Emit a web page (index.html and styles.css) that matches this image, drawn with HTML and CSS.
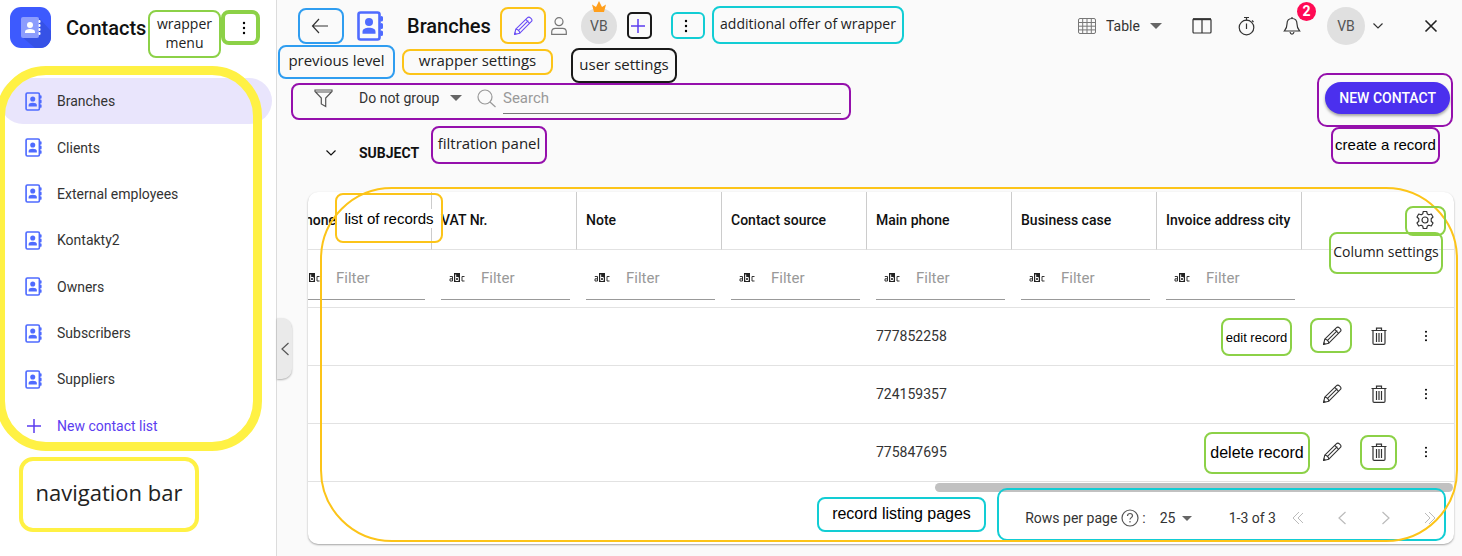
FILE: index.html
```
<!DOCTYPE html>
<html lang="en">
<head>
	<meta charset="UTF-8">
	<meta name="viewport" content="width=device-width, initial-scale=1">
	<title>Contacts - Branches</title>
	<link rel="stylesheet" href="styles.css">
</head>
<body>
	<!-- icon set -->
	<svg class="defs" aria-hidden="true">
		<symbol id="i-contact" viewBox="0 0 28 30">
			<rect x="1.500" y="1.500" width="21" height="27" rx="2" fill="none" stroke="currentColor" stroke-width="2.600"/>
			<circle cx="12" cy="11" r="4" fill="currentColor"/>
			<path d="M5.500 22.700v-2c0-2.800 3-3.900 6.500-3.900s6.500 1.100 6.500 3.900v2z" fill="currentColor"/>
			<path d="M24.500 6.500v2.500M24.500 13.500v3M24.500 21v2.500" stroke="currentColor" stroke-width="3" stroke-linecap="round"/>
		</symbol>
		<symbol id="i-dots" viewBox="0 0 4 14">
			<circle cx="2" cy="2" r="1.200"/><circle cx="2" cy="7" r="1.200"/><circle cx="2" cy="12" r="1.200"/>
		</symbol>
		<symbol id="i-pencil" viewBox="0 0 20 20">
			<g fill="none" stroke="currentColor" stroke-width="1.100" stroke-linejoin="round">
				<path d="M1.500 18.500l1.300-5.300L14.300 1.800c.9-.9 2.200-.9 3.100 0l.8.8c.9.9.9 2.200 0 3.100L6.800 17.200z"/>
				<path d="M2.800 13.200c2 0 4 2 4 4M5 14.800L15.300 4.600M12.700 3.400l3.900 3.900"/>
			</g>
			<path d="M1.300 18.700l.6-2.600 2 2z" fill="currentColor"/>
		</symbol>
		<symbol id="i-trash" viewBox="0 0 16 18">
			<g fill="none" stroke="currentColor">
				<path d="M.5 3.500h15M5.500 3.300V1.200h5v2.100M2 3.700v12.500c0 .7.500 1.200 1.200 1.200h9.600c.7 0 1.200-.5 1.200-1.200V3.700M5.500 6v9M8 6v9M10.500 6v9" stroke-width="1.200"/>
			</g>
		</symbol>
		<symbol id="i-plus" viewBox="0 0 16 16">
			<path d="M8 1v14M1 8h14" stroke="currentColor" stroke-width="1.500"/>
		</symbol>
		<symbol id="i-caret" viewBox="0 0 12 6"><path d="M0 0h12L6 6z" fill="currentColor"/></symbol>
		<symbol id="i-down" viewBox="0 0 12 8">
			<path d="M1.500 1.500L6 6l4.500-4.500" fill="none" stroke="currentColor" stroke-width="1.200"/>
		</symbol>
		<symbol id="i-left" viewBox="0 0 10 14">
			<path d="M8.500 1L2 7l6.500 6" fill="none" stroke="currentColor" stroke-width="1.200"/>
		</symbol>
		<symbol id="i-dleft" viewBox="0 0 12 14">
			<path d="M7 1L1 7l6 6M11 2L6 7l5 5" fill="none" stroke="currentColor"/>
		</symbol>
		<symbol id="i-abc" viewBox="0 0 16 10">
			<rect x="5" y="0" width="6" height="9" fill="#222"/>
			<g fill="none" stroke="#333">
				<path d="M.8 3.500h2.700V8H1V5.800h2.500M15.500 3.500h-2.500V8h2.500"/>
				<path d="M6.700 1.500v6h2.600v-3H7" stroke="#fff"/>
			</g>
		</symbol>
	</svg>

	<aside class="sidebar">
		<div class="side-head">
			<svg class="logo" viewBox="0 0 41 41" aria-hidden="true">
				<rect width="41" height="41" rx="11" fill="#3d5afe"/>
				<path d="M29 11l12 13v6a11 11 0 0 1-11 11h-5L12 30z" fill="#3652e6"/>
				<rect x="11" y="10" width="18" height="21" rx="2" fill="#8c9dfd"/>
				<circle cx="20" cy="18" r="3" fill="#fff"/>
				<path d="M15 26v-1c0-2.200 2.300-3 5-3s5 .8 5 3v1z" fill="#fff"/>
				<path d="M29.500 14v1M29.500 18v1M29.500 22v1M29.500 26v1" stroke="#fff" stroke-width="2" stroke-linecap="round"/>
			</svg>
			<h1 class="title">Contacts</h1>
			<button class="icon-btn side-menu" aria-label="Menu"><svg width="4" height="14"><use href="#i-dots"/></svg></button>
		</div>
		<nav class="nav">
			<a href="#" class="on"><svg><use href="#i-contact"/></svg>Branches</a>
			<a href="#"><svg><use href="#i-contact"/></svg>Clients</a>
			<a href="#"><svg><use href="#i-contact"/></svg>External employees</a>
			<a href="#"><svg><use href="#i-contact"/></svg>Kontakty2</a>
			<a href="#"><svg><use href="#i-contact"/></svg>Owners</a>
			<a href="#"><svg><use href="#i-contact"/></svg>Subscribers</a>
			<a href="#"><svg><use href="#i-contact"/></svg>Suppliers</a>
			<a href="#" class="new"><svg><use href="#i-plus"/></svg>New contact list</a>
		</nav>

		<!-- callouts over the sidebar -->
		<div class="mark green m-menu"></div>
		<div class="note green n-menu">wrapper menu</div>
		<div class="mark yellow m-nav"></div>
		<div class="note yellow n-nav">navigation bar</div>
	</aside>

	<main class="main">
		<button class="collapse" aria-label="Collapse panel"><svg width="10" height="14"><use href="#i-left"/></svg></button>

		<header class="topbar">
			<button class="icon-btn back" aria-label="Back">
				<svg width="18" height="16" viewBox="0 0 18 16"><path d="M17 8H1.500M8 1L1.500 8 8 15" fill="none" stroke="currentColor" stroke-width="1.200"/></svg>
			</button>
			<svg class="head-icon"><use href="#i-contact"/></svg>
			<h2 class="title">Branches</h2>
			<button class="icon-btn edit" aria-label="Edit"><svg width="20" height="20"><use href="#i-pencil"/></svg></button>
			<svg class="person" width="16" height="18" viewBox="0 0 16 18" aria-hidden="true">
				<g fill="none" stroke="#777" stroke-width="1.200"><circle cx="8" cy="4.700" r="4"/><path d="M.7 17.300V15c0-2.200 1.500-3.700 3.700-3.700h7.200c2.200 0 3.700 1.500 3.700 3.700v2.300z"/></g>
			</svg>
			<div class="avatar owner">VB
				<svg class="crown" viewBox="0 0 14 11" aria-hidden="true"><path d="M2 11L0 3.500 4 6l3-6 3 6 4-2.500L12 11z" fill="#ff9f1c"/></svg>
			</div>
			<button class="icon-btn add" aria-label="Add user"><svg width="16" height="16"><use href="#i-plus"/></svg></button>
			<button class="icon-btn more" aria-label="More"><svg width="4" height="14"><use href="#i-dots"/></svg></button>

			<div class="tools">
				<label class="pick view">
					<svg width="18" height="16" viewBox="0 0 18 16"><g fill="none" stroke="#777"><rect x=".5" y=".5" width="17" height="15" rx="1.500"/><path d="M0 4.500h18M0 8.200h18M0 11.900h18M4.700 1v15M9 1v15M13.300 1v15"/></g></svg>
					<select aria-label="View"><option>Table</option></select>
					<svg class="caret"><use href="#i-caret"/></svg>
				</label>
				<button class="icon-btn" aria-label="Columns">
					<svg width="20" height="16" viewBox="0 0 20 16"><g fill="none" stroke="#333" stroke-width="1.200"><rect x="1" y="1" width="18" height="14" rx="1"/><path d="M10 1v14"/><path d="M1 1.200h18" stroke-width="2"/></g></svg>
				</button>
				<button class="icon-btn" aria-label="Timer">
					<svg width="20" height="20" viewBox="0 0 20 20"><g fill="none" stroke="#333" stroke-width="1.200"><circle cx="9.500" cy="11.500" r="7.300"/><path d="M7 1.500h5M9.500 1.500v3M9.500 7.500v5.500M15 4.500l1.500 1.500"/></g></svg>
				</button>
				<button class="icon-btn bell" aria-label="Notifications">
					<svg width="20" height="20" viewBox="0 0 20 20"><g fill="none" stroke="#333" stroke-width="1.200"><path d="M10 2.500C6.500 2.500 5 5 5 8c0 4-1.500 5.500-2.700 7h15.400C16.500 13.500 15 12 15 8c0-3-1.500-5.500-5-5.500zM10 1v1.500M8 16c.3 1.500 1 2.200 2 2.200s1.700-.7 2-2.200"/></g></svg>
					<span class="badge">2</span>
				</button>
				<div class="account">
					<div class="avatar">VB</div>
					<svg width="12" height="8"><use href="#i-down"/></svg>
				</div>
				<button class="icon-btn close" aria-label="Close">
					<svg width="14" height="14" viewBox="0 0 14 14"><path d="M1.500 1.500l11 11M12.500 1.500l-11 11" stroke="#222" stroke-width="1.600"/></svg>
				</button>
			</div>
		</header>

		<div class="toolbar">
			<button class="icon-btn" aria-label="Filter">
				<svg width="19" height="19" viewBox="0 0 19 19"><g fill="none" stroke="#555" stroke-width="1.200"><path d="M1 1h17v1.500L11.700 9v8.500L7.300 15V9L1 2.500zM1 3h17"/></g></svg>
			</button>
			<label class="pick group">
				<select aria-label="Grouping"><option>Do not group</option></select>
				<svg class="caret"><use href="#i-caret"/></svg>
			</label>
			<label class="search">
				<svg width="19" height="19" viewBox="0 0 19 19"><g fill="none" stroke="#999" stroke-width="1.200"><circle cx="8" cy="8" r="7"/><path d="M13 13l5.500 5"/></g></svg>
				<input type="text" placeholder="Search" aria-label="Search">
			</label>
			<button class="primary">NEW CONTACT</button>
		</div>

		<button class="subject"><svg width="12" height="8"><use href="#i-down"/></svg>SUBJECT</button>

		<section class="card">
			<table>
				<colgroup><col><col><col><col><col><col><col><col class="actions-col"></colgroup>
				<thead>
					<tr class="names">
						<th>Phone</th>
						<th>VAT Nr.</th>
						<th>Note</th>
						<th>Contact source</th>
						<th>Main phone</th>
						<th>Business case</th>
						<th>Invoice address city</th>
						<th>
							<button class="icon-btn gear" aria-label="Column settings">
								<svg width="20" height="20" viewBox="0 0 20 20"><g fill="none" stroke="#333" stroke-width="1.200" stroke-linejoin="round"><circle cx="10" cy="10" r="3"/><path d="M8.300 1.500h3.400l.6 2.400 1.600.9 2.400-.8 1.700 3-1.800 1.700v2.600l1.800 1.700-1.700 3-2.400-.8-1.600.9-.6 2.400H8.300l-.6-2.400-1.600-.9-2.400.8-1.700-3 1.800-1.700V8.700L2 7l1.700-3 2.400.8 1.600-.9z"/></g></svg>
							</button>
						</th>
					</tr>
					<tr class="filters">
						<td><label><svg><use href="#i-abc"/></svg><input type="text" placeholder="Filter" aria-label="Filter phone"></label></td>
						<td><label><svg><use href="#i-abc"/></svg><input type="text" placeholder="Filter" aria-label="Filter VAT number"></label></td>
						<td><label><svg><use href="#i-abc"/></svg><input type="text" placeholder="Filter" aria-label="Filter note"></label></td>
						<td><label><svg><use href="#i-abc"/></svg><input type="text" placeholder="Filter" aria-label="Filter contact source"></label></td>
						<td><label><svg><use href="#i-abc"/></svg><input type="text" placeholder="Filter" aria-label="Filter main phone"></label></td>
						<td><label><svg><use href="#i-abc"/></svg><input type="text" placeholder="Filter" aria-label="Filter business case"></label></td>
						<td><label><svg><use href="#i-abc"/></svg><input type="text" placeholder="Filter" aria-label="Filter invoice address city"></label></td>
						<td></td>
					</tr>
				</thead>
				<tbody>
					<tr>
						<td></td><td></td><td></td><td></td><td>777852258</td><td></td><td></td>
						<td>
							<div class="actions">
								<button class="icon-btn" aria-label="Edit"><svg width="20" height="20"><use href="#i-pencil"/></svg></button>
								<button class="icon-btn" aria-label="Delete"><svg width="16" height="18"><use href="#i-trash"/></svg></button>
								<button class="icon-btn" aria-label="More"><svg width="4" height="12"><use href="#i-dots"/></svg></button>
							</div>
						</td>
					</tr>
					<tr>
						<td></td><td></td><td></td><td></td><td>724159357</td><td></td><td></td>
						<td>
							<div class="actions">
								<button class="icon-btn" aria-label="Edit"><svg width="20" height="20"><use href="#i-pencil"/></svg></button>
								<button class="icon-btn" aria-label="Delete"><svg width="16" height="18"><use href="#i-trash"/></svg></button>
								<button class="icon-btn" aria-label="More"><svg width="4" height="12"><use href="#i-dots"/></svg></button>
							</div>
						</td>
					</tr>
					<tr>
						<td></td><td></td><td></td><td></td><td>775847695</td><td></td><td></td>
						<td>
							<div class="actions">
								<button class="icon-btn" aria-label="Edit"><svg width="20" height="20"><use href="#i-pencil"/></svg></button>
								<button class="icon-btn" aria-label="Delete"><svg width="16" height="18"><use href="#i-trash"/></svg></button>
								<button class="icon-btn" aria-label="More"><svg width="4" height="12"><use href="#i-dots"/></svg></button>
							</div>
						</td>
					</tr>
				</tbody>
			</table>
			<div class="scroll"><div class="thumb"></div></div>
			<footer class="pager">
				<label for="rows">Rows per page</label>
				<svg class="help" width="18" height="18" viewBox="0 0 18 18" aria-hidden="true"><g fill="none" stroke="#555" stroke-width="1.200"><circle cx="9" cy="9" r="8"/><path d="M6.500 7c0-1.500 1-2.500 2.500-2.500s2.500 1 2.500 2.300c0 1.700-2.500 2-2.500 3.700M9 12v1.500"/></g></svg>
				<span class="colon">:</span>
				<select id="rows"><option>25</option></select>
				<svg class="caret"><use href="#i-caret"/></svg>
				<span class="range">1-3 of 3</span>
				<button class="icon-btn" aria-label="First page"><svg width="12" height="14"><use href="#i-dleft"/></svg></button>
				<button class="icon-btn" aria-label="Previous page"><svg width="10" height="14"><use href="#i-left"/></svg></button>
				<button class="icon-btn flip" aria-label="Next page"><svg width="10" height="14"><use href="#i-left"/></svg></button>
				<button class="icon-btn flip" aria-label="Last page"><svg width="12" height="14"><use href="#i-dleft"/></svg></button>
			</footer>
		</section>

		<!-- callouts over the main area -->
		<div class="mark blue m-back"></div>
		<div class="note blue n-back">previous level</div>
		<div class="mark orange m-edit"></div>
		<div class="note orange n-edit">wrapper settings</div>
		<div class="mark black m-user"></div>
		<div class="note black n-user">user settings</div>
		<div class="mark cyan m-more"></div>
		<div class="note cyan n-more">additional offer of wrapper</div>
		<div class="mark purple m-filter"></div>
		<div class="note purple n-filter">filtration panel</div>
		<div class="mark purple m-create"></div>
		<div class="note arial purple n-create">create a record</div>
		<div class="mark cyan m-pages"></div>
		<div class="note arial cyan n-pages">record listing pages</div>
		<div class="mark orange m-list"></div>
		<div class="note arial orange n-list"><span>list of records</span></div>
		<div class="mark green m-gear"></div>
		<div class="note green n-gear"><span>Column settings</span></div>
		<div class="mark green m-pencil"></div>
		<div class="note arial green n-pencil">edit record</div>
		<div class="mark green m-trash"></div>
		<div class="note arial green n-trash">delete record</div>
	</main>
</body>
</html>
```
FILE: styles.css
```
*{
	box-sizing: border-box;
	padding: 0;
	margin: 0;
}
body{
	display: flex;
	min-height: 100vh;
	background-color: #fafafa;
	color: #333;
	font: 14px/20px Roboto, "Liberation Sans", sans-serif;
}
svg{
	display: block;
	flex: none;
}
.defs{
	position: absolute;
	width: 0;
	height: 0;
}
a{
	color: inherit;
	text-decoration: none;
}
button, input, select{
	border: 0;
	background: none;
	color: inherit;
	font: inherit;
	outline: none;
}
select{
	appearance: none;
	cursor: pointer;
}
input::placeholder{
	color: #999;
	opacity: 1;
}
.icon-btn{
	display: flex;
	flex: none;
	align-items: center;
	justify-content: center;
	color: #333;
	cursor: pointer;
}
.title{
	color: #111;
	font-size: 20px;
	font-weight: 500;
	line-height: 24px;
}
.caret{
	width: 12px;
	height: 6px;
	color: #666;
}

/* sidebar */
.sidebar{
	position: relative;
	flex: none;
	width: 277px;
	background-color: #fff;
	border-right: 1px solid #dcdcdc;
}
.side-head{
	display: flex;
	align-items: center;
	height: 78px;
	padding: 0 16px 23px 10px;
}
.logo{
	width: 41px;
	height: 41px;
	margin-right: 15px;
}
.side-menu{
	width: 32px;
	height: 32px;
	margin-left: auto;
}
.nav{
	display: grid;
	grid-auto-rows: 1fr;
	min-height: 371px;
	margin-right: 4px;
}
.nav a{
	display: flex;
	align-items: center;
	gap: 14px;
	padding-left: 25px;
	border-radius: 24px;
}
.nav svg{
	width: 18px;
	height: 19px;
	color: #4f6bff;
}
.nav .on{
	background-color: #e9e5fc;
}
.nav .new, .nav .new svg{
	color: #5b3df0;
}
.nav .new svg{
	height: 16px;
}

/* main */
.main{
	position: relative;
	flex: 1;
	min-width: 0;
	padding-bottom: 12px;
}
.collapse{
	position: absolute;
	top: 318px;
	left: 0;
	display: flex;
	align-items: center;
	justify-content: center;
	width: 15px;
	height: 61px;
	background-color: #eaeaea;
	border-radius: 0 10px 10px 0;
	box-shadow: 0 1px 2px rgba(0,0,0,.3);
	color: #555;
}
.topbar{
	display: flex;
	align-items: center;
	height: 52px;
	padding: 0 24px 0 21px;
}
.back{
	width: 44px;
	margin-right: 15px;
}
.head-icon{
	width: 28px;
	height: 30px;
	margin-right: 22px;
	color: #4f6bff;
}
.edit{
	width: 32px;
	margin: 0 12px 0 16px;
	color: #6a4df5;
}
.person{
	margin-right: 14px;
}
.avatar{
	position: relative;
	width: 38px;
	height: 38px;
	border-radius: 50%;
	background-color: #e0e0e0;
	color: #555;
	line-height: 38px;
	text-align: center;
}
.owner{
	width: 36px;
	height: 36px;
	line-height: 36px;
}
.crown{
	position: absolute;
	top: -7px;
	left: 11px;
	width: 14px;
	height: 11px;
}
.add{
	width: 26px;
	margin: 0 18px 0 8px;
	color: #5b3df0;
}
.more{
	width: 34px;
}
.tools{
	display: flex;
	align-items: center;
	gap: 25px;
	margin-left: auto;
}
.pick{
	display: flex;
	align-items: center;
	gap: 10px;
}
.view{
	margin-right: 5px;
}
.bell{
	position: relative;
}
.badge{
	position: absolute;
	top: -14px;
	right: -14px;
	width: 19px;
	height: 19px;
	border-radius: 50%;
	background-color: #ff0a54;
	color: #fff;
	font-weight: 700;
	line-height: 19px;
	text-align: center;
}
.account{
	display: flex;
	align-items: center;
	gap: 7px;
}
.close{
	margin-left: 15px;
}
.toolbar{
	display: flex;
	align-items: flex-start;
	height: 72px;
	margin-top: 10px;
	padding: 20px 12px 0 37px;
}
.toolbar > *{
	min-height: 32px;
}
.group{
	margin: 0 15px 0 26px;
}
.search{
	display: flex;
	align-items: center;
	gap: 7px;
	flex: 0 1 364px;
}
.search input{
	flex: 1;
	min-width: 0;
	height: 32px;
	border-bottom: 1px solid #777;
	font-size: 15px;
}
.primary{
	height: 32px;
	margin-left: auto;
	padding: 0 14px;
	border-radius: 16px;
	background-color: #4b30ee;
	box-shadow: 0 2px 3px rgba(0,0,0,.35);
	color: #fff;
	font-weight: 500;
	cursor: pointer;
}
.subject{
	display: flex;
	align-items: center;
	gap: 22px;
	height: 38px;
	margin-left: 48px;
	color: #111;
	font-weight: 700;
}

/* records */
.card{
	margin: 20px 8px 0 31px;
	overflow: hidden;
	background-color: #fff;
	border-radius: 10px;
	box-shadow: 0 1px 2px rgba(0,0,0,.35);
}
/* the list is scrolled to its right end, the first column is half hidden */
table{
	width: calc(100% + 21px);
	margin-left: -21px;
	border-collapse: separate;
	border-spacing: 0;
	table-layout: fixed;
}
col{
	width: 145px;
}
.actions-col{
	width: auto;
}
th, td{
	height: 58px;
	padding: 0 7px 2px 9px;
	border-bottom: 1px solid #e2e2e2;
	text-align: left;
	white-space: nowrap;
}
th{
	color: #111;
	font-weight: 500;
	border-right: 1px solid #ccc;
}
th:last-child{
	border-right: 0;
}
.gear{
	margin: 0 12px 0 auto;
}
.filters td{
	padding-bottom: 0;
}
.filters label{
	display: flex;
	align-items: center;
	gap: 16px;
	height: 42px;
	padding-left: 8px;
	border-bottom: 1px solid #999;
}
.filters svg{
	width: 16px;
	height: 10px;
}
.filters input{
	width: 80px;
	min-width: 0;
	font-size: 15px;
}
.actions{
	display: flex;
	align-items: center;
	justify-content: flex-end;
	padding-right: 5px;
}
.actions .icon-btn{
	width: 32px;
	height: 32px;
	margin-left: 15px;
}
.scroll{
	height: 10px;
	padding: 1px 1px 0;
}
.thumb{
	width: 518px;
	max-width: 100%;
	height: 9px;
	margin-left: auto;
	border-radius: 5px;
	background-color: #c1c1c1;
}
.pager{
	display: flex;
	align-items: center;
	height: 52px;
	padding-right: 8px;
	justify-content: flex-end;
}
.help{
	margin: 0 3px 0 4px;
}
.colon{
	margin-right: 14px;
}
.pager .caret{
	width: 10px;
	height: 5px;
	margin: 0 37px 0 6px;
}
.pager .icon-btn{
	width: 32px;
	height: 32px;
	margin-left: 12px;
	color: #bbb;
}
.pager .range + .icon-btn{
	margin-left: 6px;
}
.flip svg{
	transform: scaleX(-1);
}

/* callouts */
.mark, .note{
	position: absolute;
	border: 2px solid;
	border-radius: 8px;
}
.mark{
	pointer-events: none;
}
.note{
	display: flex;
	align-items: center;
	justify-content: center;
	color: #222;
	font: 15px/19px "Open Sans", sans-serif;
	text-align: center;
	white-space: nowrap;
}
.arial{
	color: #000;
	font: 15px/19px "Liberation Sans", sans-serif;
}
.note span{
	background-color: #fff;
}
.green{ border-color: #8cd147; }
.yellow{ border-color: #fff144; }
.blue{ border-color: #2f9df0; }
.orange{ border-color: #fcc419; }
.black{ border-color: #1a1a1a; }
.cyan{ border-color: #12cdd4; }
.purple{ border-color: #9510ac; }

.m-menu{ top: 10px; left: 221px; width: 39px; height: 35px; border-width: 4px; }
.n-menu{ top: 10px; left: 148px; width: 73px; height: 48px; padding: 0 6px 2px; font-size: 14px; white-space: normal; }
.m-nav{ top: 66px; left: -4px; width: 266px; height: 385px; border-width: 9px; border-radius: 50px; }
.n-nav{ top: 457px; left: 19px; width: 180px; height: 75px; padding-bottom: 6px; border-width: 4px; border-radius: 14px; font-size: 22px; line-height: 30px; }

.m-back{ top: 8px; left: 21px; width: 46px; height: 36px; }
.n-back{ top: 45px; left: 1px; width: 117px; height: 34px; padding-bottom: 4px; }
.m-edit{ top: 7px; left: 223px; width: 46px; height: 37px; }
.n-edit{ top: 49px; left: 125px; width: 151px; height: 26px; padding-bottom: 4px; }
.m-user{ top: 12px; left: 350px; width: 25px; height: 27px; border-radius: 5px; }
.n-user{ top: 48px; left: 294px; width: 106px; height: 35px; padding-bottom: 2px; }
.m-more{ top: 12px; left: 394px; width: 34px; height: 27px; border-radius: 6px; }
.n-more{ top: 6px; left: 435px; width: 192px; height: 38px; padding-bottom: 3px; font-size: 14px; }
.m-filter{ top: 83px; left: 14px; width: 560px; height: 37px; }
.n-filter{ top: 126px; left: 154px; width: 116px; height: 38px; padding-bottom: 4px; }
.m-create{ top: 73px; right: 9px; width: 136px; height: 54px; border-radius: 10px; }
.n-create{ top: 127px; right: 22px; width: 109px; height: 37px; padding-bottom: 2px; }
.m-pages{ top: 488px; right: 16px; width: 449px; height: 53px; border-radius: 10px; }
.n-pages{ top: 497px; right: 476px; width: 169px; height: 35px; padding-bottom: 3px; font-size: 16px; }
.m-list{ top: 187px; left: 43px; right: 4px; height: 355px; border-radius: 72px; }
.n-list{ top: 193px; left: 58px; width: 108px; height: 50px; }
.m-gear{ top: 206px; right: 16px; width: 41px; height: 30px; }
.n-gear{ top: 232px; right: 19px; width: 114px; height: 42px; padding-bottom: 4px; font-size: 14px; }
.m-pencil{ top: 318px; right: 110px; width: 42px; height: 35px; }
.n-pencil{ top: 318px; right: 170px; width: 71px; height: 38px; font-size: 13px; }
.m-trash{ top: 435px; right: 65px; width: 37px; height: 35px; }
.n-trash{ top: 432px; right: 152px; width: 106px; height: 42px; padding-bottom: 2px; font-size: 16px; }
```
